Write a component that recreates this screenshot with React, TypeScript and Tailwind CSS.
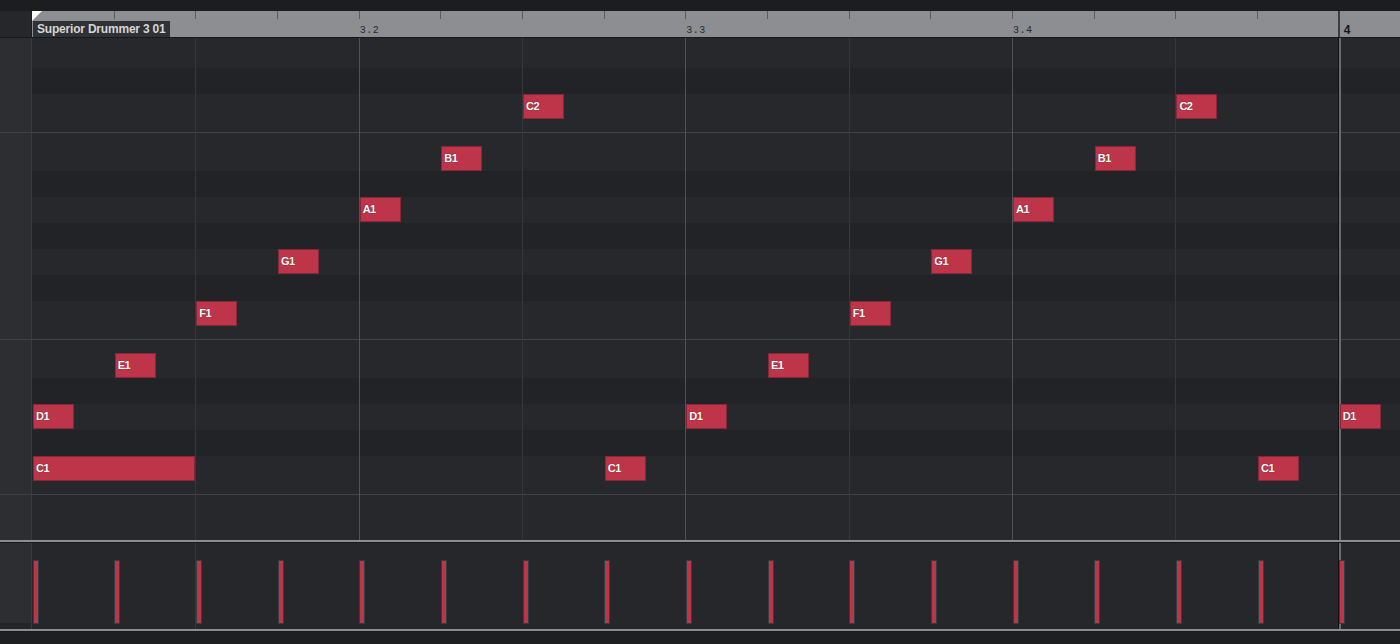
const STEP = 81.67;

// pitch lanes of the key editor, top to bottom (heights in px)
const bands: { h: number; kind: "light" | "dark" | "line" }[] = [
  { h: 30, kind: "light" },
  { h: 26, kind: "dark" },
  { h: 38, kind: "light" },
  { h: 1, kind: "line" },
  { h: 38, kind: "light" },
  { h: 26, kind: "dark" },
  { h: 26, kind: "light" },
  { h: 26, kind: "dark" },
  { h: 26, kind: "light" },
  { h: 26, kind: "dark" },
  { h: 38, kind: "light" },
  { h: 1, kind: "line" },
  { h: 38, kind: "light" },
  { h: 26, kind: "dark" },
  { h: 26, kind: "light" },
  { h: 26, kind: "dark" },
  { h: 38, kind: "light" },
  { h: 1, kind: "line" },
  { h: 45, kind: "light" },
];

const rowTop: Record<string, number> = {
  C2: 56,
  B1: 108,
  A1: 159,
  G1: 211,
  F1: 263,
  E1: 315,
  D1: 366,
  C1: 418,
};

const notes = [
  { name: "D1", step: 0 },
  { name: "C1", step: 0, len: 2 },
  { name: "E1", step: 1 },
  { name: "F1", step: 2 },
  { name: "G1", step: 3 },
  { name: "A1", step: 4 },
  { name: "B1", step: 5 },
  { name: "C2", step: 6 },
  { name: "C1", step: 7 },
  { name: "D1", step: 8 },
  { name: "E1", step: 9 },
  { name: "F1", step: 10 },
  { name: "G1", step: 11 },
  { name: "A1", step: 12 },
  { name: "B1", step: 13 },
  { name: "C2", step: 14 },
  { name: "C1", step: 15 },
  { name: "D1", step: 16 },
];

const steps = Array.from({ length: 17 }, (_, i) => i);

const NoteBlock = ({ name, step, len }: { name: string; step: number; len?: number }) => (
  <div
    className="absolute h-[25px] bg-[#be3549] border border-[#86273a] flex items-center pl-[2px] text-[11px] font-bold text-white tracking-[-0.5px] [text-shadow:0_0_1px_#5a1020]"
    style={{
      left: step * STEP + 1,
      top: rowTop[name],
      width: len ? len * STEP - 1 : 41,
    }}
  >
    {name}
  </div>
);

export default function App() {
  return (
    <div className="w-[1400px] h-[644px] overflow-hidden bg-[#1d1e20] flex flex-col font-['Liberation_Sans',Arial,sans-serif]">
      {/* top strip */}
      <div className="h-[11px] bg-[#1c1d1f]" />

      {/* ruler */}
      <div className="h-[26px] flex">
        <div className="w-[32px] bg-[#26272a] border-r border-[#1a1b1d]" />
        <div className="flex-1 relative bg-[#8d8e91]">
          {/* white start marker */}
          <div className="absolute left-0 top-0 w-0 h-0 border-t-[10px] border-r-[10px] border-t-white border-r-transparent" />
          {steps.map((s) =>
            s === 0 || s === 16 ? null : (
              <div
                key={s}
                className="absolute top-0 w-px h-[8px] bg-[#5c5d60]"
                style={{ left: s * STEP }}
              />
            )
          )}
          <div className="absolute top-0 h-full w-[2px] bg-[#3c3d40]" style={{ left: 16 * STEP - 1 }} />
          {["3.2", "3.3", "3.4"].map((t, i) => (
            <span
              key={t}
              className="absolute top-[14px] text-[10px] leading-[12px] tracking-[0.5px] font-['Liberation_Mono',monospace] text-[#2a2b2d]"
              style={{ left: (i + 1) * 4 * STEP + 1 }}
            >
              {t}
            </span>
          ))}
          <span
            className="absolute top-[12px] text-[12px] leading-[14px] font-bold text-[#151515]"
            style={{ left: 16 * STEP + 5 }}
          >
            4
          </span>
          <div className="absolute left-[1px] top-[10px] h-[16px] px-[4px] bg-[#303134] text-[12px] leading-[16px] font-bold tracking-[-0.2px] text-[#d6d6d6]">
            Superior Drummer 3 01
          </div>
        </div>
      </div>
      <div className="h-px bg-[#18191b]" />

      {/* note grid */}
      <div className="relative h-[502px]">
        <div className="flex flex-col">
          {bands.map((b, i) => (
            <div key={i} className="flex" style={{ height: b.h }}>
              <div
                className={
                  b.kind === "line"
                    ? "w-[32px] bg-[#3f4043]"
                    : "w-[31px] bg-[#2d2e31] border-r border-[#3a3b3e] box-content"
                }
              />
              <div
                className={
                  "flex-1 " +
                  (b.kind === "line"
                    ? "bg-[#414346]"
                    : b.kind === "dark"
                    ? "bg-[#222326]"
                    : "bg-[#26282b]")
                }
              />
            </div>
          ))}
        </div>
        <div className="absolute left-[32px] top-0 right-0 bottom-0">
          {[1, 3, 5, 7].map((k) => (
            <div key={k} className="absolute top-0 bottom-0 w-px bg-[#35373a]" style={{ left: k * 2 * STEP }} />
          ))}
          {[2, 4, 6].map((k) => (
            <div key={k} className="absolute top-0 bottom-0 w-px bg-[#505255]" style={{ left: k * 2 * STEP }} />
          ))}
          <div className="absolute top-0 bottom-0 w-px bg-[#111213]" style={{ left: 16 * STEP - 1 }} />
          <div className="absolute top-0 bottom-0 w-[2px] bg-[#6a6b6e]" style={{ left: 16 * STEP }} />
          {notes.map((n, i) => (
            <NoteBlock key={i} {...n} />
          ))}
        </div>
      </div>

      {/* separator */}
      <div className="h-[3px] bg-[#8c8d90] border-b border-[#18191b]" />

      {/* velocity lane */}
      <div className="h-[86px] flex">
        <div className="w-[32px] flex flex-col border-r border-[#3a3b3e]">
          <div className="h-[80px] bg-[#2d2e31]" />
          <div className="flex-1 bg-[#242528]" />
        </div>
        <div className="flex-1 relative bg-[#25272a]">
          <div className="absolute top-0 bottom-0 w-px bg-[#35373a]" style={{ left: 2 * STEP }} />
          <div className="absolute top-0 bottom-0 w-px bg-[#111213]" style={{ left: 16 * STEP - 1 }} />
          <div className="absolute top-0 bottom-0 w-[2px] bg-[#6a6b6e]" style={{ left: 16 * STEP }} />
          {steps.map((s) => (
            <div
              key={s}
              className="absolute top-[17px] h-[64px] w-[6px] bg-[#be3549] border border-[#2d4043]"
              style={{ left: s * STEP + 0.5 }}
            />
          ))}
        </div>
      </div>

      {/* bottom separator */}
      <div className="h-[3px] bg-[#8c8d90] border-b border-[#18191b]" />
      <div className="flex-1 bg-[#1e1f21]" />
    </div>
  );
}
